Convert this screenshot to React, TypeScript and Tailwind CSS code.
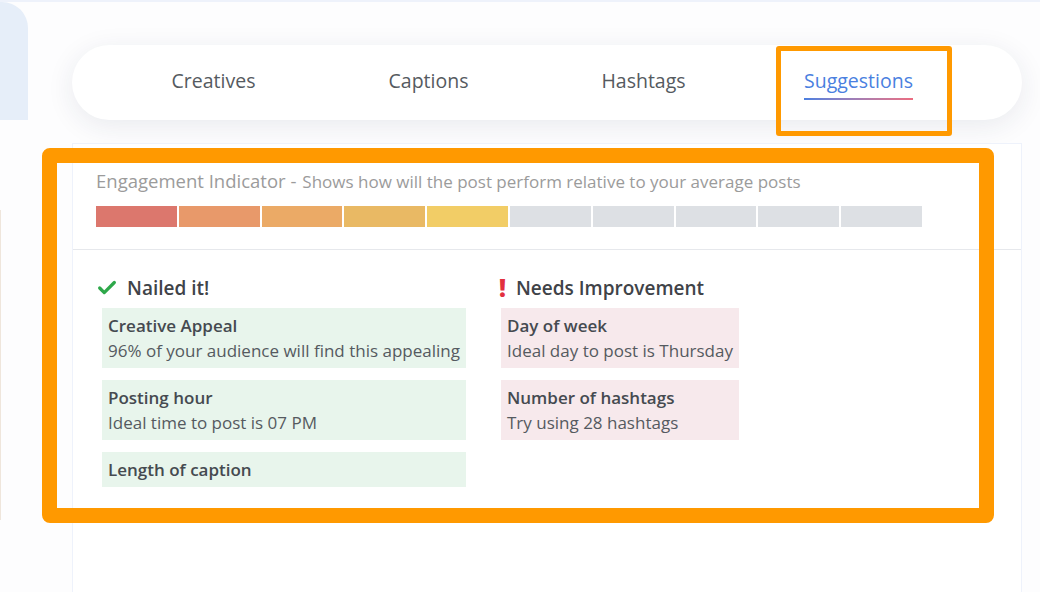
import { Check } from "lucide-react"

const tabs = ["Creatives", "Captions", "Hashtags", "Suggestions"]

const barColors = [
  "bg-[#dc776d]",
  "bg-[#e8996a]",
  "bg-[#ebaa66]",
  "bg-[#e9b964]",
  "bg-[#f2cd66]",
  "bg-[#dde0e4]",
  "bg-[#dde0e4]",
  "bg-[#dde0e4]",
  "bg-[#dde0e4]",
  "bg-[#dde0e4]",
]

const nailed = [
  { title: "Creative Appeal", text: "96% of your audience will find this appealing" },
  { title: "Posting hour", text: "Ideal time to post is 07 PM" },
  { title: "Length of caption", text: "" },
]

const improve = [
  { title: "Day of week", text: "Ideal day to post is Thursday" },
  { title: "Number of hashtags", text: "Try using 28 hashtags" },
]

const SuggestionBox = ({ title, text, tone }: { title: string; text: string; tone: "good" | "bad" }) => (
  <div className={`px-[6px] py-[5px] leading-[25px] text-[17px] ${tone === "good" ? "bg-[#e8f5ec]" : "bg-[#f7e9ec]"}`}>
    <div className="font-semibold text-[#454a50]">{title}</div>
    {text && <div className="text-[#555a60] whitespace-nowrap">{text}</div>}
  </div>
)

export default function App() {
  return (
    <div className="relative w-[1040px] h-[592px] overflow-hidden bg-[#fdfdfe] border-t-2 border-[#eef2fb] font-['Open_Sans',sans-serif]">
      <div className="flex h-full">
        {/* sidebar stub */}
        <div className="w-[28px] shrink-0 flex flex-col">
          <div className="h-[118px] bg-[#e6eef9] rounded-tr-[26px]" />
          <div className="mt-[90px] h-[310px] w-px bg-[#efe6dc]" />
        </div>

        <div className="flex-1 pl-[44px] pr-[18px]">
          {/* tab bar */}
          <div className="mt-[43px] h-[75px] rounded-full bg-white shadow-[0_6px_28px_rgba(30,40,80,0.09)] flex items-center pl-[34px] pb-[3px]">
            {tabs.map((tab) => (
              <div key={tab} className="w-[215px] flex justify-center">
                {tab === "Suggestions" ? (
                  <div className="relative text-[19.5px] text-[#4a7fe0]">
                    {tab}
                    <div className="absolute left-0 right-0 -bottom-[4px] h-[2px] bg-gradient-to-r from-[#4a7fe0] to-[#ec6c80]" />
                  </div>
                ) : (
                  <div className="text-[19.5px] text-[#555a60]">{tab}</div>
                )}
              </div>
            ))}
          </div>

          {/* suggestions card */}
          <div className="mt-[23px] h-[460px] bg-white border border-[#eef2fb]">
            <div className="px-[23px] pt-[23px] pb-[22px] border-b border-[#e6e8ec]">
              <div className="h-[27px] flex items-baseline text-[#9b9b9b] whitespace-nowrap">
                <span className="text-[18.5px]">Engagement Indicator -</span>
                <span className="text-[17px] ml-[6px]">Shows how will the post perform relative to your average posts</span>
              </div>
              <div className="mt-[12px] w-[826px] h-[21px] flex gap-[2px]">
                {barColors.map((c, i) => (
                  <div key={i} className={`flex-1 ${c}`} />
                ))}
              </div>
            </div>

            <div className="px-[23px] pt-[24px] grid grid-cols-[403px_1fr]">
              <div>
                <div className="h-[28px] flex items-center gap-[9px] text-[19px] font-semibold text-[#3f4348]">
                  <Check className="w-[22px] h-[22px] text-[#2ea84a]" strokeWidth={3.5} />
                  <span>Nailed it!</span>
                </div>
                <div className="mt-[6px] ml-[6px] w-fit flex flex-col gap-[12px]">
                  {nailed.map((n) => (
                    <SuggestionBox key={n.title} title={n.title} text={n.text} tone="good" />
                  ))}
                </div>
              </div>
              <div>
                <div className="h-[28px] flex items-center gap-[10px] text-[19px] font-semibold text-[#3f4348]">
                  <span className="text-[24px] font-black text-[#e2303f] leading-none">!</span>
                  <span>Needs Improvement</span>
                </div>
                <div className="mt-[6px] ml-[2px] w-fit flex flex-col gap-[12px]">
                  {improve.map((n) => (
                    <SuggestionBox key={n.title} title={n.title} text={n.text} tone="bad" />
                  ))}
                </div>
              </div>
            </div>
          </div>
        </div>
      </div>

      {/* annotation highlights */}
      <div className="absolute left-[776px] top-[44px] w-[176px] h-[90px] border-[5px] border-[#ff9900] rounded-[3px]" />
      <div className="absolute left-[42px] top-[146px] w-[952px] h-[375px] border-[15px] border-[#ff9900] rounded-[8px]" />
    </div>
  )
}
